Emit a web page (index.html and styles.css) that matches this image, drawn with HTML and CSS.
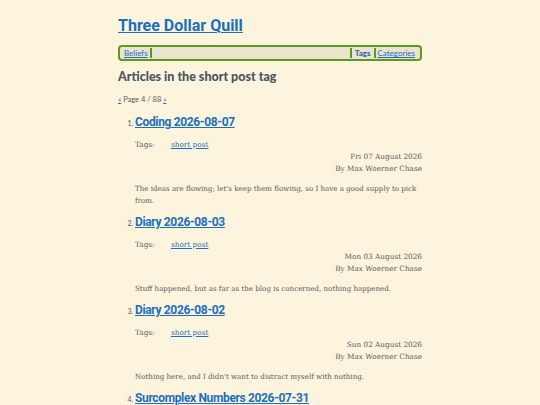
FILE: index.html
```html
<!DOCTYPE html>
<html lang="en">
<head>
<meta charset="utf-8">
<title>Three Dollar Quill</title>
<link rel="stylesheet" href="styles.css">
</head>
<body>
<div class="page">
  <h1 class="site-title"><a href="#">Three Dollar Quill</a></h1>
  <nav class="nav">
    <ul class="nav-left">
      <li class="nav-item sep-right"><a href="#">Beliefs</a></li>
    </ul>
    <div class="nav-spacer"></div>
    <ul class="nav-right">
      <li class="nav-item sep-left sep-right current">Tags</li>
      <li class="nav-item"><a href="#">Categories</a></li>
    </ul>
  </nav>
  <h2 class="page-heading">Articles in the short post tag</h2>
  <p class="pager"><a href="#">«</a> Page 4 / 88 <a href="#">»</a></p>
  <ol class="articles">
    <li class="article">
      <h3 class="article-title"><a href="#">Coding 2026-08-07</a></h3>
      <div class="tags"><span class="tags-label">Tags:</span><a href="#">short post</a></div>
      <div class="meta">
        <div>Fri 07 August 2026</div>
        <div>By Max Woerner Chase</div>
      </div>
      <p class="summary">The ideas are flowing; let's keep them flowing, so I have a good supply to pick from.</p>
    </li>
    <li class="article">
      <h3 class="article-title"><a href="#">Diary 2026-08-03</a></h3>
      <div class="tags"><span class="tags-label">Tags:</span><a href="#">short post</a></div>
      <div class="meta">
        <div>Mon 03 August 2026</div>
        <div>By Max Woerner Chase</div>
      </div>
      <p class="summary">Stuff happened, but as far as the blog is concerned, nothing happened.</p>
    </li>
    <li class="article">
      <h3 class="article-title"><a href="#">Diary 2026-08-02</a></h3>
      <div class="tags"><span class="tags-label">Tags:</span><a href="#">short post</a></div>
      <div class="meta">
        <div>Sun 02 August 2026</div>
        <div>By Max Woerner Chase</div>
      </div>
      <p class="summary">Nothing here, and I didn't want to distract myself with nothing.</p>
    </li>
    <li class="article">
      <h3 class="article-title"><a href="#">Surcomplex Numbers 2026-07-31</a></h3>
      <div class="tags"><span class="tags-label">Tags:</span><a href="#">short post</a></div>
    </li>
  </ol>
</div>
</body>
</html>
```
FILE: styles.css
```css
html, body {
  margin: 0;
  padding: 0;
  background: #fcf4dc;
}
body {
  font-family: "DejaVu Serif", serif;
  font-size: 7.3px;
  color: #5a5a5a;
  line-height: 12px;
}
a {
  color: #1a6fc0;
}
.page {
  width: 304px;
  margin: 0 auto;
  padding-top: 14px;
}
.site-title {
  font-family: "Roboto", "Lato", sans-serif;
  font-weight: 700;
  font-size: 16px;
  line-height: 24px;
  margin: 0 0 7px 0;
}
.site-title a {
  color: #1a6fc0;
}
.nav {
  display: flex;
  align-items: center;
  height: 12px;
  border: 2px solid #5b9a1e;
  border-radius: 4px;
  background: #ebe3cf;
  padding: 0 3px 0 2px;
  font-family: "Lato", sans-serif;
  font-size: 8px;
}
.nav ul {
  display: flex;
  list-style: none;
  margin: 0;
  padding: 0;
}
.nav-spacer {
  flex: 1;
}
.nav-item {
  padding: 0 2px;
  line-height: 10px;
}
.sep-right {
  border-right: 2px solid #5b9a1e;
}
.sep-left {
  border-left: 2px solid #5b9a1e;
}
.current {
  font-weight: 700;
  color: #1a5f9f;
  padding: 0 3px;
}
.page-heading {
  font-family: "Lato", sans-serif;
  font-weight: 900;
  font-size: 12.5px;
  color: #4b5560;
  margin: 8px 0 0 0;
  line-height: 16px;
}
.pager {
  font-family: "Lato", sans-serif;
  font-size: 7.5px;
  margin: 9px 0 0 0;
}
.articles {
  margin: 8px 0 0 0;
  padding-left: 17px;
}
.article::marker {
  font-family: "Lato", sans-serif;
  font-size: 7px;
}
.article-title {
  font-family: "Roboto", "Lato", sans-serif;
  font-weight: 700;
  font-size: 12px;
  letter-spacing: -0.35px;
  line-height: 16px;
  margin: 0;
}
.tags {
  margin-top: 9px;
  display: flex;
}
.tags-label {
  width: 36px;
}
.meta {
  text-align: right;
}
.summary {
  font-size: 7.1px;
  margin: 8px 0 7px 0;
}
```
